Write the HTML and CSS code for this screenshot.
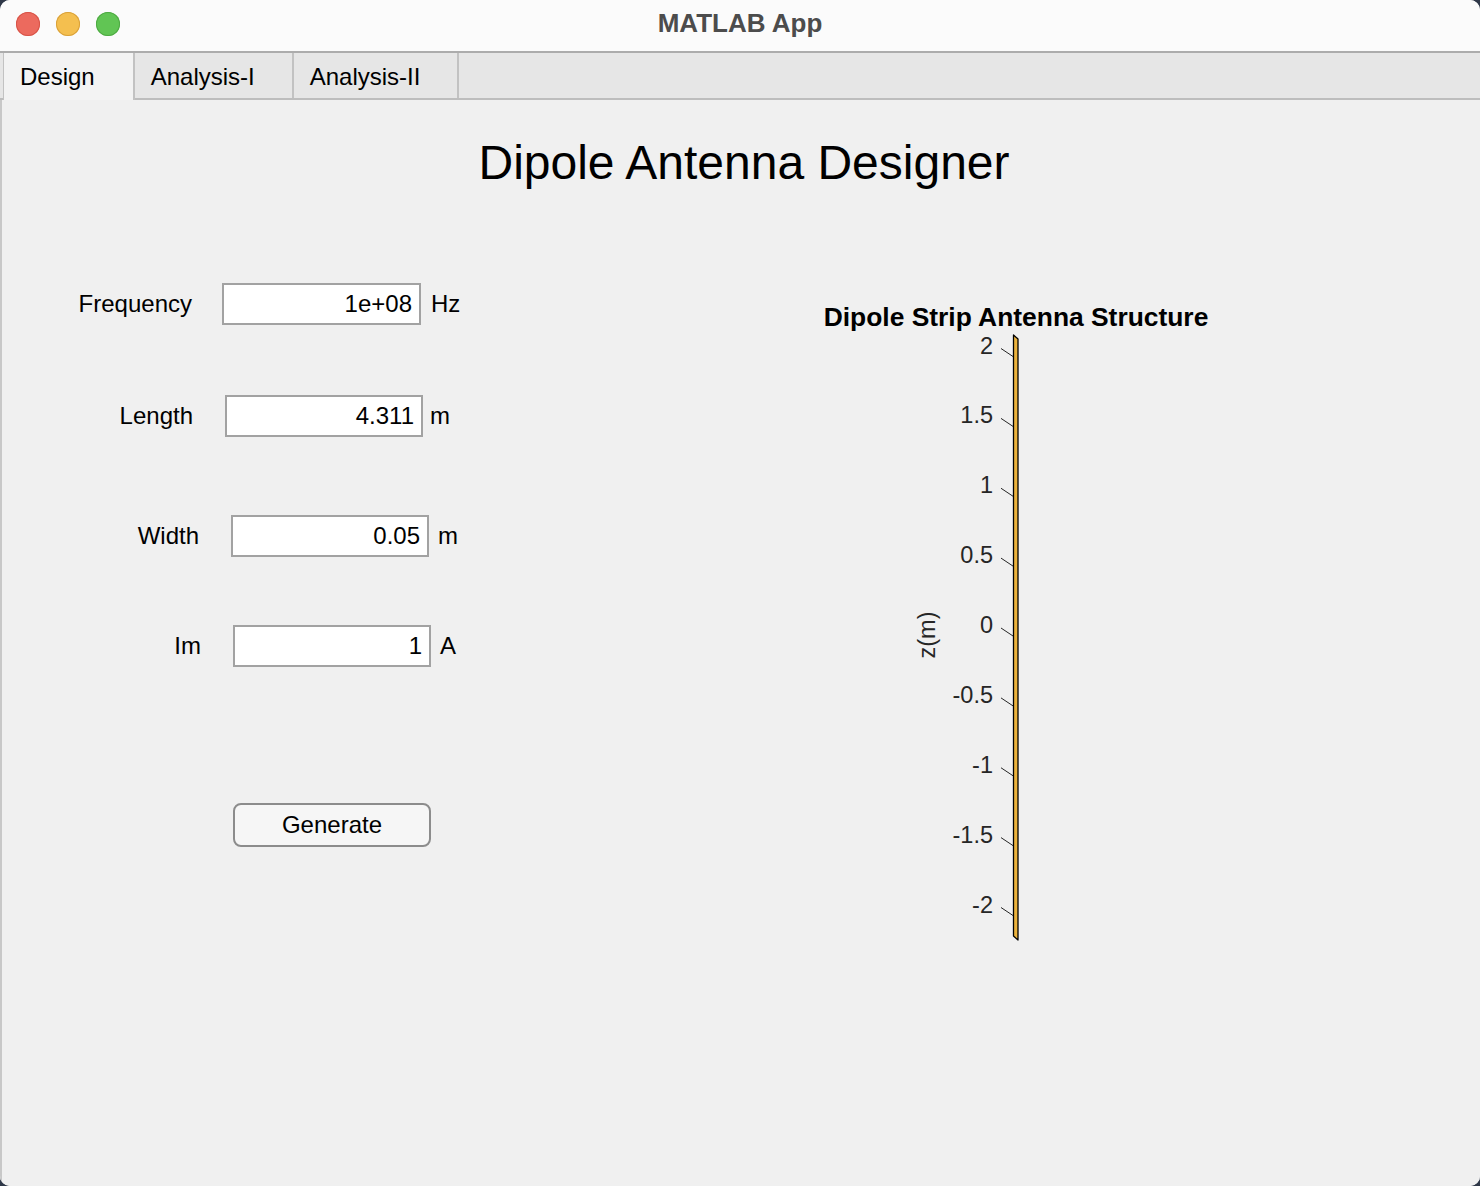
FILE: index.html
```html
<!DOCTYPE html>
<html lang="en">
<head>
<meta charset="utf-8">
<title>MATLAB App</title>
<link rel="stylesheet" href="styles.css">
</head>
<body>
<div class="window">
  <header class="titlebar">
    <div class="lights">
      <span class="light light--red"></span>
      <span class="light light--yellow"></span>
      <span class="light light--green"></span>
    </div>
    <div class="window-title">MATLAB App</div>
  </header>
  <nav class="tabs">
    <div class="tab tab--active">Design</div>
    <div class="tab">Analysis-I</div>
    <div class="tab">Analysis-II</div>
  </nav>
  <main class="content">
    <h1 class="app-title">Dipole Antenna Designer</h1>
    <div class="panel">
      <form class="form">
        <div class="row row--freq">
          <label class="label">Frequency</label>
          <div class="field">1e+08</div>
          <span class="unit">Hz</span>
        </div>
        <div class="row row--length">
          <label class="label">Length</label>
          <div class="field">4.311</div>
          <span class="unit">m</span>
        </div>
        <div class="row row--width">
          <label class="label">Width</label>
          <div class="field">0.05</div>
          <span class="unit">m</span>
        </div>
        <div class="row row--im">
          <label class="label">Im</label>
          <div class="field">1</div>
          <span class="unit">A</span>
        </div>
        <button type="button" class="btn">Generate</button>
      </form>
      <figure class="plot">
        <svg class="plot-svg" width="440" height="670" viewBox="0 0 440 670">
          <text class="plot-title" x="216" y="36" text-anchor="middle">Dipole Strip Antenna Structure</text>
          <g class="ticklabels" text-anchor="end">
            <text x="193" y="63.5">2</text>
            <text x="193" y="133.4">1.5</text>
            <text x="193" y="203.25">1</text>
            <text x="193" y="273.1">0.5</text>
            <text x="193" y="343">0</text>
            <text x="193" y="412.9">-0.5</text>
            <text x="193" y="482.75">-1</text>
            <text x="193" y="552.6">-1.5</text>
            <text x="193" y="622.5">-2</text>
          </g>
          <g class="ticks">
            <line x1="201" y1="58.5" x2="213" y2="66.5"/>
            <line x1="201" y1="128.4" x2="213" y2="136.4"/>
            <line x1="201" y1="198.25" x2="213" y2="206.25"/>
            <line x1="201" y1="268.1" x2="213" y2="276.1"/>
            <line x1="201" y1="338" x2="213" y2="346"/>
            <line x1="201" y1="407.9" x2="213" y2="415.9"/>
            <line x1="201" y1="477.75" x2="213" y2="485.75"/>
            <line x1="201" y1="547.6" x2="213" y2="555.6"/>
            <line x1="201" y1="617.5" x2="213" y2="625.5"/>
          </g>
          <text class="axis-label" x="135" y="345" text-anchor="middle" transform="rotate(-90 135 345)">z(m)</text>
          <polygon class="strip" points="213.5,45 218,49 218,650 213.5,646"/>
        </svg>
      </figure>
    </div>
  </main>
</div>
</body>
</html>
```

FILE: styles.css
```css
* { box-sizing: border-box; }

html, body {
  margin: 0;
  padding: 0;
}

body {
  background: #2f3848;
  font-family: "Liberation Sans", Arial, Helvetica, sans-serif;
  color: #000;
}

.window {
  width: 1480px;
  height: 1186px;
  border-radius: 10px;
  overflow: hidden;
  background: #f0f0f0;
  display: flex;
  flex-direction: column;
}

/* Title bar */
.titlebar {
  height: 53px;
  flex: 0 0 53px;
  background: #fbfbfb;
  border-bottom: 2px solid #acacac;
  display: flex;
  align-items: center;
  position: relative;
}

.lights {
  display: flex;
  gap: 16px;
  padding-left: 16px;
  margin-top: -3px;
}

.light {
  width: 24px;
  height: 24px;
  border-radius: 50%;
  display: block;
}

.light--red { background: #ec6a5e; box-shadow: inset 0 0 0 1px #d75448; }
.light--yellow { background: #f4bf4f; box-shadow: inset 0 0 0 1px #d9a13a; }
.light--green { background: #61c554; box-shadow: inset 0 0 0 1px #4ea943; }

.window-title {
  position: absolute;
  left: 0;
  right: 0;
  top: 8px;
  text-align: center;
  font-size: 26px;
  font-weight: bold;
  color: #4c4c4c;
  line-height: 30px;
  pointer-events: none;
}

/* Tabs */
.tabs {
  height: 47px;
  flex: 0 0 47px;
  background: #e6e6e6;
  border-bottom: 2px solid #bdbdbd;
  display: flex;
  padding-left: 3px;
}

.tab {
  height: 45px;
  padding: 2px 37px 0 16px;
  display: flex;
  align-items: center;
  font-size: 24px;
  border-right: 2px solid #c2c2c2;
  color: #000;
}

.tab--active {
  background: #f3f3f3;
  border-left: 1px solid #c2c2c2;
  height: 47px;
  margin-bottom: -2px;
  padding-right: 38px;
  padding-bottom: 2px;
}

/* Content */
.content {
  flex: 1 1 auto;
  background: #f0f0f0;
  box-shadow: inset 2px 0 0 #c8c8c8;
}

.app-title {
  margin: 35px 0 0;
  text-align: center;
  font-size: 48px;
  line-height: 56px;
  font-weight: normal;
  padding-left: 8px;
  color: #000;
}

.panel {
  display: flex;
  align-items: flex-start;
}

.form {
  flex: 0 0 480px;
  display: flex;
  flex-direction: column;
  padding-top: 92px;
  margin: 0;
}

.row {
  display: grid;
  grid-template-columns: 140px 199px auto;
  align-items: center;
  height: 42px;
  font-size: 24px;
}

.label {
  text-align: right;
}

.field {
  height: 42px;
  background: #fff;
  border: 2px solid #a2a2a2;
  text-align: right;
  padding-right: 7px;
  line-height: 38px;
  font-size: 24px;
}

.row--freq { margin-left: 52px; column-gap: 30px; }
.row--freq .unit { margin-left: -20px; }
.row--length { margin-left: 53px; column-gap: 32px; margin-top: 70px; grid-template-columns: 140px 198px auto; }
.row--length .unit { margin-left: -25px; }
.row--width { margin-left: 59px; column-gap: 32px; margin-top: 78px; grid-template-columns: 140px 198px auto; }
.row--width .unit { margin-left: -23px; }
.row--im { margin-left: 61px; column-gap: 32px; margin-top: 68px; grid-template-columns: 140px 198px auto; }
.row--im .unit { margin-left: -23px; }

.btn {
  margin: 136px 0 0 233px;
  width: 198px;
  height: 44px;
  border: 2px solid #8c8c8c;
  border-radius: 8px;
  background: #f6f6f6;
  font-family: "Liberation Sans", Arial, Helvetica, sans-serif;
  font-size: 24px;
  color: #000;
  padding: 0;
}

/* Plot */
.plot {
  margin: 99px 0 0 320px;
  width: 440px;
  height: 670px;
}

.plot-svg {
  display: block;
  overflow: visible;
}

.plot-title {
  font-family: "Liberation Sans", Arial, Helvetica, sans-serif;
  font-size: 26.4px;
  font-weight: bold;
  fill: #000;
}

.ticklabels text,
.axis-label {
  font-family: "Liberation Sans", Arial, Helvetica, sans-serif;
  font-size: 23.5px;
  fill: #262626;
}

.ticks line {
  stroke: #262626;
  stroke-width: 1;
}

.strip {
  fill: #ebb23c;
  stroke: #000;
  stroke-width: 1.3;
  stroke-linejoin: round;
}
```
